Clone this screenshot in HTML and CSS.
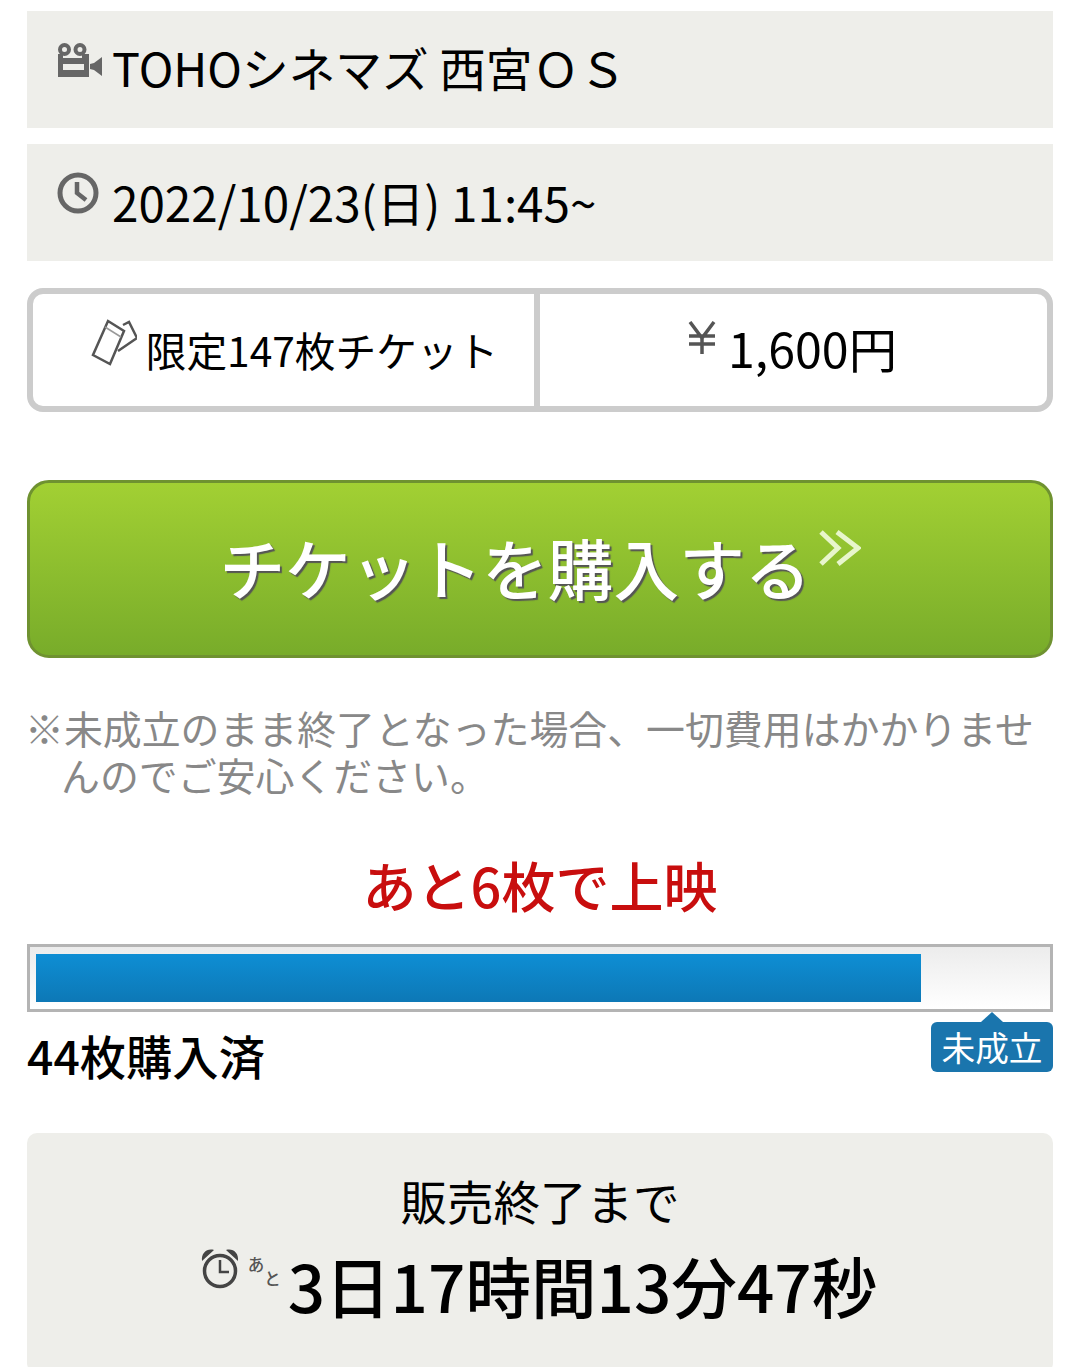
FILE: index.html
```html
<!DOCTYPE html>
<html lang="ja">
<head>
    <meta charset="UTF-8">
    <meta name="viewport" content="width=device-width, initial-scale=1.0">
    <title>チケット購入</title>
    <link rel="stylesheet" href="styles.css">
</head>
<body>
    <div class="container">
        <div class="info-box">
            <svg class="info-icon camera-icon" width="46" height="36" viewBox="0 0 46 36">
                <circle cx="7.5" cy="6.5" r="4.5" fill="none" stroke="#666" stroke-width="4"/>
                <circle cx="23" cy="6.5" r="4.5" fill="none" stroke="#666" stroke-width="4"/>
                <path d="M1 11h5v4h19v-4h7v23H1z M6 21v6h21v-6z" fill="#666" fill-rule="evenodd"/>
                <path d="M33 21l4-1 8-6v19l-8-6-4-1z" fill="#666"/>
            </svg>
            <span class="info-text venue-text">TOHOシネマズ 西宮ＯＳ</span>
        </div>
        <div class="info-box">
            <svg class="info-icon" width="42" height="42" viewBox="0 0 42 42">
                <circle cx="21" cy="21" r="18" fill="none" stroke="#666" stroke-width="5"/>
                <path d="M20 10v11l9 7" fill="none" stroke="#666" stroke-width="4.5"/>
            </svg>
            <span class="info-text date-text">2022/10/23(日) 11:45~</span>
        </div>

        <div class="ticket-box">
            <div class="ticket-cell ticket-left">
                <svg class="ticket-icon" width="48" height="48" viewBox="-2 0 48 48">
                    <path d="M17 2L33 12 19 45 2 36z" fill="none" stroke="#555" stroke-width="2.5"/>
                    <path d="M14 8l16 10" fill="none" stroke="#999" stroke-width="1.5"/>
                    <path d="M32 6l6-3 8 16-19 13" fill="none" stroke="#555" stroke-width="2.5"/>
                </svg>
                <span class="ticket-name">限定147枚チケット</span>
            </div>
            <div class="ticket-cell">
                <svg class="yen-icon" width="30" height="34" viewBox="0 0 30 34">
                    <path d="M3 1l12 16L27 1M15 17v16M2 15h26M2 23h26" fill="none" stroke="#555" stroke-width="3.5"/>
                </svg>
                <span class="ticket-price">1,600円</span>
            </div>
        </div>

        <a class="buy-btn" href="#">
            <span class="buy-label">チケットを購入する</span>
            <svg class="buy-arrow" width="42" height="36" viewBox="0 0 42 36">
                <path d="M2 2l17 16L2 34M18 2l21 16-20 16" fill="none" stroke="#e8f6cc" stroke-width="5"/>
            </svg>
        </a>

        <p class="note">※未成立のまま終了となった場合、一切費用はかかりませんのでご安心ください。</p>

        <div class="remain">あと6枚で上映</div>

        <div class="progress">
            <div class="progress-fill" style="width: 87.8%"></div>
        </div>
        <div class="progress-row">
            <span class="sold">44枚購入済</span>
            <span class="status-tag">未成立</span>
        </div>

        <div class="countdown">
            <div class="countdown-title">販売終了まで</div>
            <div class="countdown-time">
                <svg class="alarm-icon" width="38" height="42" viewBox="0 0 38 42">
                    <circle cx="19" cy="23" r="15.5" fill="none" stroke="#444" stroke-width="3.5"/>
                    <path d="M19 12v12h9" fill="none" stroke="#444" stroke-width="2.5"/>
                    <path d="M1 13C0 5 6 0 13 2z M37 13C38 5 32 0 25 2z" fill="#444"/>
                </svg>
                <span class="ato"><span>あ</span><span class="ato-to">と</span></span>
                <span class="time-text">3日17時間13分47秒</span>
            </div>
        </div>
    </div>
</body>
</html>
```

FILE: styles.css
```css
html, body {
    margin: 0;
    padding: 0;
    height: 1367px;
    overflow: hidden;
}
body {
    font-family: "Noto Sans CJK JP", "Noto Sans", sans-serif;
    background-color: #fff;
    color: #000;
}
.container {
    padding: 11px 27px 0;
}
.info-box {
    display: flex;
    align-items: flex-start;
    height: 117px;
    box-sizing: border-box;
    margin-bottom: 16px;
    padding: 28px 0 0 30px;
    background-color: #eeeeea;
}
.info-icon {
    flex-shrink: 0;
    margin-right: 13px;
}
.camera-icon {
    margin: 4px 9px 0 0;
}
.info-text {
    font-size: 46.5px;
    line-height: 60px;
    white-space: pre;
}
.venue-text {
    font-size: 46.7px;
    margin-top: -2px;
}
.date-text {
    font-size: 47.6px;
}
.ticket-box {
    display: flex;
    height: 124px;
    box-sizing: border-box;
    margin-top: 27px;
    border: 6px solid #ccc;
    border-radius: 16px;
}
.ticket-cell {
    width: 50%;
    box-sizing: border-box;
    display: flex;
    justify-content: center;
    align-items: center;
}
.ticket-left {
    padding-left: 20px;
    border-right: 6px solid #ccc;
}
.ticket-icon {
    margin: -14px 9px 0 0;
}
.ticket-name {
    margin-top: -2px;
    font-size: 40.7px;
}
.yen-icon {
    margin: -24px 11px 0 0;
}
.ticket-price {
    margin: -6px 3px 0 0;
    font-size: 48.3px;
}
.buy-btn {
    display: flex;
    justify-content: center;
    align-items: center;
    height: 178px;
    box-sizing: border-box;
    margin-top: 68px;
    border: 3px solid #6f9230;
    border-radius: 22px;
    background: linear-gradient(#a2d033, #78ac2a);
    text-decoration: none;
}
.buy-label {
    margin-top: -6px;
    font-size: 65.7px;
    font-weight: 500;
    color: #fff;
    text-shadow: 2px 2px 1px #555;
}
.buy-arrow {
    margin: -42px 0 0 8px;
}
.note {
    margin: 46px 0 0;
    padding-left: 34px;
    text-indent: -36px;
    font-size: 38.9px;
    line-height: 47px;
    color: #888;
}
.remain {
    margin-top: 52px;
    text-align: center;
    font-size: 54px;
    font-weight: 500;
    line-height: 70px;
    color: #c80e0e;
}
.progress {
    height: 68px;
    box-sizing: border-box;
    margin-top: 24px;
    padding: 7px 6px;
    border: 3px solid #b4b4b4;
    background: linear-gradient(#ececec, #fff);
}
.progress-fill {
    height: 100%;
    background: linear-gradient(#0e8ed4, #0d78b6);
}
.progress-row {
    display: flex;
    justify-content: space-between;
    align-items: flex-start;
}
.sold {
    margin-top: 10px;
    font-size: 46.3px;
    font-weight: 500;
    line-height: 66px;
}
.status-tag {
    position: relative;
    margin-top: 10px;
    width: 122px;
    height: 50px;
    border-radius: 6px;
    background-color: #1a75ad;
    color: #fff;
    text-align: center;
    font-size: 33.7px;
    line-height: 50px;
}
.status-tag::before {
    content: "";
    position: absolute;
    top: -10px;
    left: 50%;
    margin-left: -11px;
    border-left: 11px solid transparent;
    border-right: 11px solid transparent;
    border-bottom: 10px solid #1a75ad;
}
.countdown {
    height: 240px;
    box-sizing: border-box;
    margin-top: 45px;
    padding-top: 35px;
    border-radius: 10px;
    background-color: #eeeeea;
    text-align: center;
}
.countdown-title {
    font-size: 46.5px;
    line-height: 64px;
}
.countdown-time {
    display: flex;
    justify-content: center;
    align-items: flex-start;
    margin-top: 15px;
    padding-right: 2px;
}
.alarm-icon {
    margin: 1px 9px 0 0;
}
.ato {
    display: flex;
    margin: 8px 7px 0 0;
    font-size: 16.5px;
    font-weight: 500;
    line-height: 18px;
    color: #555;
}
.ato-to {
    margin-top: 14px;
}
.time-text {
    font-size: 65.6px;
    font-weight: 500;
    line-height: 76px;
}
```
